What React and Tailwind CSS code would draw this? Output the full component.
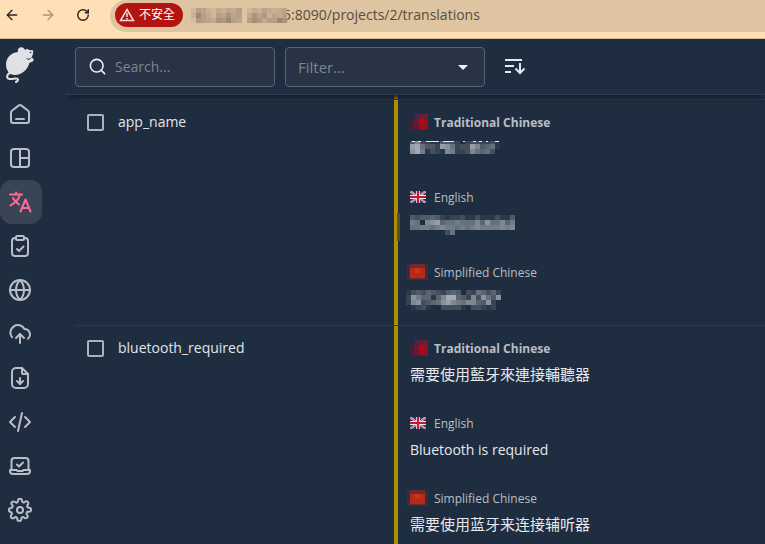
import { ArrowLeft, ArrowRight, RotateCw, Search } from 'lucide-react'

const languages = {
  tw: 'Traditional Chinese',
  gb: 'English',
  cn: 'Simplified Chinese',
}

// one hex digit per block, the higher the lighter
const maskTw = ['483211443202332231', 'ab6442a96233a84561', '9b7132187223865630']
const maskEn = ['434454212231131113114', '76089a566766685966857', '667767877676787777878', '000000036000000000000']
const maskCn = ['1343543245403265352', '29755158bb542839649', '28934569a8768854920', '0123100333310332120']
const maskHost = ['2653243546024354345', '3a64265856048573546', '1765487a650697466a8']

const rows = [
  {
    key: 'app_name',
    cells: [
      { lang: 'tw', mask: maskTw },
      { lang: 'gb', mask: maskEn },
      { lang: 'cn', mask: maskCn },
    ],
  },
  {
    key: 'bluetooth_required',
    cells: [
      { lang: 'tw', text: '需要使用藍牙來連接輔聽器', locale: 'zh-TW' },
      { lang: 'gb', text: 'Bluetooth is required', locale: 'en' },
      { lang: 'cn', text: '需要使用蓝牙来连接辅听器', locale: 'zh-CN' },
    ],
  },
]

// each path list is drawn on a 24px grid
const menu = [
  { label: 'Home', paths: ['M8 17h8', 'M3 10.6c0-.8.3-1.4.9-1.9l6.9-5.3c.7-.5 1.7-.5 2.4 0l6.9 5.3c.6.5.9 1.1.9 1.9V19a2 2 0 0 1-2 2H5a2 2 0 0 1-2-2z'] },
  { label: 'Dashboard', paths: ['M6 3h12a3 3 0 0 1 3 3v12a3 3 0 0 1-3 3H6a3 3 0 0 1-3-3V6a3 3 0 0 1 3-3z', 'M12 3v18', 'M12 12h9'] },
  { label: 'Translations', active: true, paths: ['M2 4.5h12', 'M8 2.5v2', 'M12 4.5c-1 5-4.5 8-9.5 11', 'M5 8c1.5 3 3.5 4.5 6 6.5', 'M12.5 21.5l5-12 5 12', 'M14.5 18h6'] },
  { label: 'Tasks', paths: ['M16 4h1a3 3 0 0 1 3 3v12a3 3 0 0 1-3 3H7a3 3 0 0 1-3-3V7a3 3 0 0 1 3-3h1', 'M9 2h6a1 1 0 0 1 1 1v2a1 1 0 0 1-1 1H9a1 1 0 0 1-1-1V3a1 1 0 0 1 1-1z', 'M9 15l2 2 4.5-4.5'] },
  { label: 'Languages', paths: ['M12 2a10 10 0 1 0 0 20 10 10 0 0 0 0-20z', 'M2 12h20', 'M12 2c5.3 5.5 5.3 14.5 0 20', 'M12 2c-5.3 5.5-5.3 14.5 0 20'] },
  { label: 'Import', paths: ['M8 16l4-4 4 4', 'M12 12v9', 'M20 16.7A5.5 5.5 0 0 0 16.5 7 7.5 7.5 0 1 0 4 15.2'] },
  { label: 'Export', paths: ['M14 2H8a4 4 0 0 0-4 4v12a4 4 0 0 0 4 4h8a4 4 0 0 0 4-4V8z', 'M14 2.3V7a1 1 0 0 0 1 1h4.7', 'M9 15l3 3 3-3', 'M12 18v-6'] },
  { label: 'Developer', paths: ['M17 17l5-5-5-5', 'M7 7l-5 5 5 5', 'M14 3l-4 18'] },
  { label: 'Integrate', paths: ['M3.5 16V7a3 3 0 0 1 3-3h11a3 3 0 0 1 3 3v9', 'M2 16h6.5l1 1h5l1-1H22v1a3 3 0 0 1-3 3H5a3 3 0 0 1-3-3z', 'M9 10.5l2 2 4-4'] },
  { label: 'Settings', paths: ['M12 9a3 3 0 1 0 0 6 3 3 0 0 0 0-6z', 'M18.7 14.7a1.7 1.7 0 0 0 .3 1.9l.1.1a2 2 0 1 1-2.9 2.9l-.1-.1a1.7 1.7 0 0 0-2.8 1.2v.2a2 2 0 0 1-4 0v-.1a1.7 1.7 0 0 0-2.9-1.2l-.1.1a2 2 0 1 1-2.9-2.9l.1-.1a1.7 1.7 0 0 0-1.2-2.8H2.9a2 2 0 0 1 0-4H3a1.7 1.7 0 0 0 1.2-2.9l-.1-.1A2 2 0 1 1 7 4l.1.1a1.7 1.7 0 0 0 2.9-1.2v-.2a2 2 0 0 1 4 0v.1A1.7 1.7 0 0 0 16.8 4l.1-.1a2 2 0 1 1 2.9 2.9l-.1.1a1.7 1.7 0 0 0 1.2 2.9h.2a2 2 0 0 1 0 4H21a1.7 1.7 0 0 0-2.3.9z'] },
]

function Mosaic({ mask, className, fill = '#d3d6dc', crop = 0, children }) {
  return (
    <svg className={className} viewBox={`0 ${crop} ${mask[0].length * 5} ${mask.length * 5 - crop}`} preserveAspectRatio="none" shapeRendering="crispEdges" aria-hidden="true">
      {mask.map((line, y) =>
        [...line].map((c, x) => (
          <rect key={`${x}-${y}`} x={x * 5} y={y * 5} width="5" height="5" fill={fill} opacity={parseInt(c, 16) / 15} />
        ))
      )}
      {children}
    </svg>
  )
}

function MaskedText({ lang, mask }) {
  if (lang === 'tw') {
    return (
      <Mosaic mask={mask} crop={2} className="h-[13px] w-[90px] mt-2">
        <path stroke="#e6e8ec" d="M2 2.5h3M8 2.5h3M16 2.5h13M33 2.5h11M53 2.5h2M63 2.5h3M69 2.5h3M76 2.5h2M85 2.5h4" />
      </Mosaic>
    )
  }
  return <Mosaic mask={mask} className={`h-5 mt-[7px] ${lang === 'cn' ? 'w-[95px] -ml-1' : 'w-[105px]'}`} />
}

function Flag({ code }) {
  if (code === 'gb') {
    return (
      <svg className="w-4 h-3" viewBox="0 0 16 12" aria-hidden="true">
        <path fill="#26356f" d="M0 0h16v12H0z" />
        <path stroke="#d4d7e2" strokeWidth="2.2" d="M0 0l16 12M16 0L0 12" />
        <path stroke="#c8283c" strokeWidth=".8" d="M0 0l16 12M16 0L0 12" />
        <path stroke="#e6e8ee" strokeWidth="3.8" d="M8 0v12M0 6h16" />
        <path stroke="#cf142b" strokeWidth="2.2" d="M8 0v12M0 6h16" />
      </svg>
    )
  }
  if (code === 'tw') {
    return (
      <svg className="w-6 h-4 -ml-1" viewBox="0 0 24 16" shapeRendering="crispEdges" aria-hidden="true">
        <path fill="#2a2748" d="M0 0h13v6H0z" opacity=".7" />
        <path fill="#4c2250" d="M9 0h5v6H9z" />
        <path fill="#6a1f30" d="M14 0h8v16h-8z" />
        <path fill="#4a2036" d="M3 6h6v10H3z" opacity=".7" />
        <path fill="#6e1530" d="M8 6h5v9H8z" />
        <path fill="#98101f" d="M13 5h9v10h-9z" />
        <path fill="#c40012" d="M13 5h5v5h-5z" />
      </svg>
    )
  }
  return (
    <svg className="w-6 h-4 -ml-1" viewBox="0 0 24 16" shapeRendering="crispEdges" aria-hidden="true">
      <path fill="#55293a" d="M1 0h21v16H1z" opacity=".5" />
      <path fill="#702a2e" d="M4 0h15v15H4z" />
      <path fill="#b82a18" d="M4 4h15v10H4z" />
      <path fill="#cb3410" d="M9 4h5v5H9z" />
    </svg>
  )
}

function BrowserBar() {
  return (
    <div className="flex items-start h-[39px] bg-[#ffdfb6] border-b border-[#d8bd9a]">
      <div className="flex items-center h-[30px] w-[110px] pl-1 gap-5 text-[#2b2520]">
        <button aria-label="Back"><ArrowLeft size={16} /></button>
        <button aria-label="Forward" className="text-[#a8947b]"><ArrowRight size={16} /></button>
        <button aria-label="Reload"><RotateCw size={14} strokeWidth={2.5} /></button>
      </div>
      <div className="flex flex-1 items-center h-8 pl-[5px] pb-0.5 bg-[#dec4a1] rounded-l-full text-[#574c40]">
        <span className="flex items-center gap-1 h-6 px-1 w-[68px] rounded-full bg-[#b3140f] text-white text-xs whitespace-nowrap">
          <svg className="w-4 h-4 shrink-0" viewBox="0 0 16 16" fill="none" stroke="#f5dcdc" strokeWidth="1.5" aria-hidden="true">
            <path d="M8 2.5L14.5 13.5H1.5zM8 6v4M8 11v1.5" />
          </svg>
          不安全
        </span>
        <span className="ml-2 -mr-1 bg-[#dec4a1] z-10">
          <Mosaic className="w-24 h-[15px]" fill="#7b6a5c" mask={maskHost} />
        </span>
        <span>5:8090/projects/2/translations</span>
      </div>
    </div>
  )
}

function Logo() {
  return (
    <svg className="w-7 h-9" viewBox="0 0 28 36" aria-hidden="true">
      <path fill="#e0e1e5" d="M12 5C11 1.5 14-.5 17 .7c1 .4 1.7 1.3 2 2.3 1.5-1.5 3-1.5 4 0l4 .2c.3 2 .2 4-.8 6l-1.2 2c1.5-.7 3 .3 2.5 2-.5 1.500-2 2-4 2.500C22 22 16 28 9 28 3 28 0 23 0 17.500 0 11 5 5.500 12 5z" />
      <path fill="none" stroke="#e0e1e5" strokeWidth="2" strokeLinecap="round" d="M5 25.500c-4 1-5.500 6-1.500 6.500 3 .3 8-1.500 8.500.3.2 1-.7 2-2 2.700" />
      <path stroke="#1f2d40" fill="none" d="M20.500 11l1.500 1.500 2.500-1" />
      <circle cx="24.5" cy="5.5" r=".8" fill="#1f2d40" />
    </svg>
  )
}

function Sidebar() {
  return (
    <nav className="w-[66px] shrink-0">
      <a href="#projects" aria-label="Projects" className="block pl-[6px] pt-2 h-[53px]"><Logo /></a>
      {menu.map((item) => (
        <a
          key={item.label}
          href={`#${item.label.toLowerCase()}`}
          aria-label={item.label}
          className={`flex items-center h-11 w-[42px] pl-2 rounded-xl ${item.active ? 'bg-[#394456] text-[#ff6995]' : 'text-[#b9bec7]'}`}
        >
          <svg className="w-6 h-6" viewBox="0 0 24 24" fill="none" stroke="currentColor" strokeWidth="2" strokeLinecap="round" strokeLinejoin="round">
            {item.paths.map((d) => <path key={d} d={d} />)}
          </svg>
        </a>
      ))}
    </nav>
  )
}

function Toolbar() {
  return (
    <div className="relative flex items-center gap-[10px] h-14 pl-[9px] border-b border-[#2c3c52] shadow-[0_6px_5px_-3px_#141e2c]">
      <label className="flex items-center gap-2 w-[200px] h-10 px-3 rounded border border-[#586373] bg-[#283446] text-[#f0f1f4]">
        <Search size={19} className="shrink-0" />
        <input aria-label="Search" placeholder="Search..." className="min-w-0 flex-1 bg-transparent outline-none placeholder:text-[#7d8592]" />
      </label>
      <div className="relative w-[200px]">
        <select aria-label="Filter" className="appearance-none w-full h-10 px-3 pt-0.5 rounded border border-[#586373] bg-[#283446] text-[#7d8592] text-[15px]">
          <option>Filter...</option>
        </select>
        <svg className="absolute right-[17px] top-[18px] w-[10px] h-[5px] pointer-events-none" viewBox="0 0 10 5" aria-hidden="true">
          <path fill="#f0f1f4" d="M0 0h10L5 5z" />
        </svg>
      </div>
      <button aria-label="Sort" className="ml-2 text-[#e6e8ec]">
        <svg className="w-6 h-6" viewBox="0 0 24 24" fill="none" stroke="currentColor" strokeWidth="2">
          <path d="M2 5h17M2 11h9M2 17h6M17 8v10M12.5 13.5L17 18l4.5-4.5" />
        </svg>
      </button>
    </div>
  )
}

function Row({ row, resizable }) {
  return (
    <div className="flex border-t border-[#2e3b4e]">
      <label className="flex items-center gap-[14px] self-start w-[319px] shrink-0 h-11 pl-3 text-[#e3e5e9]">
        <input type="checkbox" className="appearance-none w-[17px] h-[17px] rounded-xs border-2 border-[#adb2ba]" />
        {row.key}
      </label>
      <div className="relative flex-1 border-l-4 border-[#b08e00] pl-3">
        {resizable && <div className="absolute -left-px top-1/2 h-7 w-[3px] bg-[#54502a]" />}
        {row.cells.map((cell) => (
          <div key={cell.lang} className="h-[75px] pt-[13px]">
            <div className={`flex items-center h-5 text-xs text-[#b9bec6] ${cell.lang === 'tw' ? 'font-bold' : ''}`}>
              <span className="flex w-6 pb-0.5"><Flag code={cell.lang} /></span>
              {languages[cell.lang]}
            </div>
            {cell.mask ? (
              <MaskedText lang={cell.lang} mask={cell.mask} />
            ) : (
              <p lang={cell.locale} className={`h-6 mt-[5px] text-[#e6e8ec] ${cell.lang === 'gb' ? 'leading-[22px]' : 'text-[15px] leading-5'}`}>{cell.text}</p>
            )}
          </div>
        ))}
      </div>
    </div>
  )
}

export default function App() {
  return (
    <div className="h-screen overflow-hidden flex flex-col bg-[#1f2d40] text-sm font-['Open_Sans','Noto_Sans_CJK_TC',sans-serif]">
      <BrowserBar />
      <div className="flex flex-1 min-h-0">
        <Sidebar />
        <main className="flex-1 min-w-0">
          <Toolbar />
          <div className="pl-[9px]">
            <div className="flex h-1"><div className="ml-[319px] w-1 bg-[#b08e00]" /></div>
            {rows.map((row, i) => <Row key={row.key} row={row} resizable={i === 0} />)}
          </div>
        </main>
      </div>
    </div>
  )
}
